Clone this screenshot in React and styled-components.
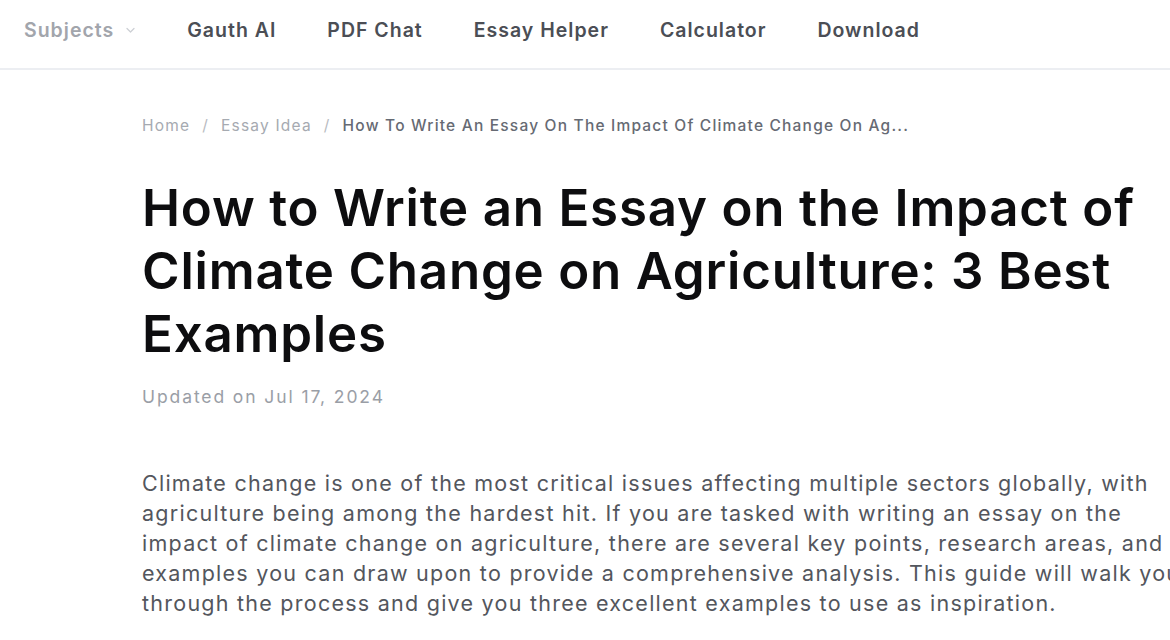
import React from "react";
import styled, { createGlobalStyle } from "styled-components";

const Global = createGlobalStyle`
  html, body {
    margin: 0;
    padding: 0;
    background: #fff;
    overflow: hidden;
  }
  body {
    font-family: Inter, "Noto Sans", sans-serif;
    -webkit-font-smoothing: antialiased;
  }
`;

const Header = styled.header`
  height: 70px;
  border-bottom: 2px solid #eceef2;
  display: flex;
  align-items: center;
  padding: 0 24px 9px;
  gap: 51px;
  box-sizing: border-box;
`;

const NavItem = styled.a`
  font-size: 19.5px;
  font-weight: 600;
  color: ${(p) => (p.$muted ? "#a2a5ac" : "#4b4e55")};
  text-decoration: none;
  display: flex;
  align-items: center;
  gap: 11px;
  white-space: nowrap;
  letter-spacing: 1px;
`;

const Chevron = () => (
  <svg width="11" height="10" viewBox="0 0 11 10" fill="none">
    <path d="M2 3.5 L5.5 7 L9 3.5" stroke="#cdd0d5" strokeWidth="1.3" strokeLinecap="round" strokeLinejoin="round" />
  </svg>
);

const Main = styled.main`
  padding: 46px 0 0 142px;
`;

const Crumbs = styled.nav`
  display: flex;
  align-items: center;
  gap: 12px;
  font-size: 15.5px;
  line-height: 20px;
  white-space: nowrap;
  letter-spacing: 1.2px;
`;

const Crumb = styled.span`
  color: ${(p) => (p.$current ? "#666a73" : p.$sep ? "#b8bbc1" : "#a6aab1")};
  font-weight: ${(p) => (p.$current ? 500 : 400)};
`;

const Title = styled.h1`
  margin: 40px 0 0;
  font-size: 51px;
  line-height: 63px;
  font-weight: 600;
  color: #0d0d0f;
  white-space: nowrap;
  letter-spacing: 0.8px;
`;

const Updated = styled.div`
  margin-top: 20px;
  font-size: 17.5px;
  line-height: 24px;
  color: #9a9ea6;
  letter-spacing: 1.9px;
`;

const Body = styled.p`
  margin: 59px 0 0;
  font-size: 21.5px;
  line-height: 30px;
  color: #53565d;
  white-space: nowrap;
  letter-spacing: 1.25px;
`;

const navItems = ["Gauth AI", "PDF Chat", "Essay Helper", "Calculator", "Download"];

export default function App() {
  return (
    <>
      <Global />
      <Header>
        <NavItem $muted>
          Subjects <Chevron />
        </NavItem>
        {navItems.map((n) => (
          <NavItem key={n}>{n}</NavItem>
        ))}
      </Header>
      <Main>
        <Crumbs>
          <Crumb>Home</Crumb>
          <Crumb $sep>/</Crumb>
          <Crumb>Essay Idea</Crumb>
          <Crumb $sep>/</Crumb>
          <Crumb $current>How To Write An Essay On The Impact Of Climate Change On Ag...</Crumb>
        </Crumbs>
        <Title>
          How to Write an Essay on the Impact of
          <br />
          Climate Change on Agriculture: 3 Best
          <br />
          Examples
        </Title>
        <Updated>Updated on Jul 17, 2024</Updated>
        <Body>
          Climate change is one of the most critical issues affecting multiple sectors globally, with
          <br />
          agriculture being among the hardest hit. If you are tasked with writing an essay on the
          <br />
          impact of climate change on agriculture, there are several key points, research areas, and
          <br />
          examples you can draw upon to provide a comprehensive analysis. This guide will walk you
          <br />
          through the process and give you three excellent examples to use as inspiration.
        </Body>
      </Main>
    </>
  );
}
